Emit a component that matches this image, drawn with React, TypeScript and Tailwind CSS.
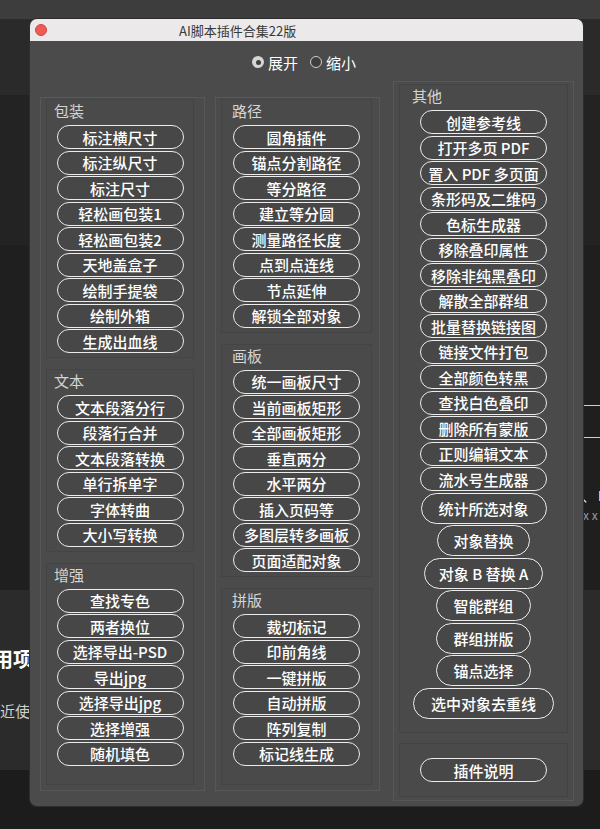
import React from "react";

type BtnProps = { t: string; cls?: string };

function Btn({ t, cls }: BtnProps) {
  return (
    <div
      className={
        "shrink-0 rounded-full border-[1.5px] border-[#ececec] bg-[#474747] text-white text-[15px] leading-none font-medium flex items-center justify-center whitespace-nowrap " +
        (cls ?? "w-[127px] h-[24px]")
      }
    >
      {t}
    </div>
  );
}

type GroupProps = {
  title: string;
  items: string[];
  labelPad: string;
  grow?: boolean;
  children?: React.ReactNode;
};

function Group({ title, items, labelPad, grow, children }: GroupProps) {
  return (
    <div
      className={
        "border border-[#444444] bg-[#4a4a4a] pt-[2px] pb-[4px] flex flex-col " +
        (grow ? "flex-1" : "")
      }
    >
      <div className={"h-[18px] leading-[18px] text-[15px] text-[#d4d4d4] mb-[5px] " + labelPad}>
        {title}
      </div>
      <div className="flex flex-col items-center gap-[1.5px]">
        {items.map((t) => (
          <Btn key={t} t={t} />
        ))}
        {children}
      </div>
    </div>
  );
}

const pack = ["标注横尺寸", "标注纵尺寸", "标注尺寸", "轻松画包装1", "轻松画包装2", "天地盖盒子", "绘制手提袋", "绘制外箱", "生成出血线"];
const text = ["文本段落分行", "段落行合并", "文本段落转换", "单行拆单字", "字体转曲", "大小写转换"];
const enhance = ["查找专色", "两者换位", "选择导出-PSD", "导出jpg", "选择导出jpg", "选择增强", "随机填色"];
const path = ["圆角插件", "锚点分割路径", "等分路径", "建立等分圆", "测量路径长度", "点到点连线", "节点延伸", "解锁全部对象"];
const board = ["统一画板尺寸", "当前画板矩形", "全部画板矩形", "垂直两分", "水平两分", "插入页码等", "多图层转多画板", "页面适配对象"];
const impose = ["裁切标记", "印前角线", "一键拼版", "自动拼版", "阵列复制", "标记线生成"];
const other = ["创建参考线", "打开多页 PDF", "置入 PDF 多页面", "条形码及二维码", "色标生成器", "移除叠印属性", "移除非纯黑叠印", "解散全部群组", "批量替换链接图", "链接文件打包", "全部颜色转黑", "查找白色叠印", "删除所有蒙版", "正则编辑文本", "流水号生成器"];

export default function App() {
  return (
    <div className="relative w-[600px] h-[829px] overflow-hidden bg-[#1f1f1f] font-['Noto_Sans_CJK_SC','Noto_Sans',sans-serif]">
      {/* background application */}
      <div className="flex flex-col h-full">
        <div className="h-[19px] bg-[#3d3d3d]" />
        <div className="h-[76px] bg-[#2a2a2a]" />
        <div className="h-[150px] bg-[#232323]" />
        <div className="h-[345px] bg-[#1f1f1f] flex justify-end">
          <div className="w-[20px] flex flex-col pt-[160px]">
            <div className="h-[1px] bg-[#cfcfcf]" />
            <div className="h-[1px] bg-[#cfcfcf] mt-[31px]" />
            <div className="mt-[50px] text-[13px] leading-[16px] text-white whitespace-nowrap overflow-hidden pl-[2px]">、 B</div>
            <div className="mt-[4px] text-[12px] leading-[14px] text-[#9a9a9a] whitespace-nowrap overflow-hidden pl-[3px]">x x</div>
          </div>
        </div>
        <div className="h-[180px] bg-[#2b2b2b] flex flex-col">
          <div className="mt-[55px] -ml-[7px] text-[20px] leading-[28px] font-bold text-white whitespace-nowrap">用项</div>
          <div className="mt-[28px] text-[15px] leading-[20px] text-[#cfcfcf] whitespace-nowrap">近使</div>
        </div>
        <div className="flex-1 bg-[#1c1c1c]" />
      </div>

      {/* plugin window */}
      <div className="absolute left-[30px] top-[19px] w-[553px] h-[787px] rounded-[7px] overflow-hidden bg-[#4b4b4b] flex flex-col shadow-[0_0_0_1px_#2e2e2e]">
        <div className="h-[22px] shrink-0 bg-[#ebe9e9] flex items-center">
          <div className="ml-[5px] w-[12px] h-[12px] rounded-full bg-[#ee5a54] border border-[#d24640]" />
          <div className="ml-[132px] text-[13px] leading-none text-[#383838]">AI脚本插件合集22版</div>
        </div>

        {/* radio row */}
        <div className="mt-[12px] h-[18px] flex items-center pl-[222px]">
          <div className="w-[12px] h-[12px] rounded-full bg-[#d6d6d6] flex items-center justify-center">
            <div className="w-[5px] h-[5px] rounded-full bg-[#3f3f3f]" />
          </div>
          <div className="ml-[4px] text-[15px] leading-none text-white">展开</div>
          <div className="ml-[12px] w-[12px] h-[12px] rounded-full border border-[#d0d0d0] bg-[#3e3e3e]" />
          <div className="ml-[4px] text-[15px] leading-none text-white">缩小</div>
        </div>

        {/* columns */}
        <div className="mt-[10px] flex items-start pl-[10px]">
          <div className="mt-[16px] w-[165px] h-[694px] border border-[#575757] pl-[5px] pr-[10px] pt-[1px] pb-[5px] flex flex-col gap-[11px]">
            <Group title="包装" items={pack} labelPad="pl-[7px]" />
            <Group title="文本" items={text} labelPad="pl-[7px]" />
            <Group title="增强" items={enhance} labelPad="pl-[7px]" grow />
          </div>

          <div className="ml-[10px] mt-[16px] w-[165px] h-[694px] border border-[#575757] pl-[5px] pr-[7px] pt-[1px] pb-[5px] flex flex-col gap-[11px]">
            <Group title="路径" items={path} labelPad="pl-[10px]" />
            <Group title="画板" items={board} labelPad="pl-[10px]" />
            <Group title="拼版" items={impose} labelPad="pl-[10px]" grow />
          </div>

          <div className="ml-[13px] w-[181px] h-[720px] border border-[#575757] px-[5px] pt-[2px] pb-[3px] flex flex-col gap-[10px]">
            <Group title="其他" items={other} labelPad="pl-[12px]" grow>
              <Btn t="统计所选对象" cls="w-[126px] h-[31px]" />
              <Btn t="对象替换" cls="w-[93px] h-[31px]" />
              <Btn t="对象 B 替换 A" cls="w-[119px] h-[31px]" />
              <Btn t="智能群组" cls="w-[95px] h-[31px]" />
              <Btn t="群组拼版" cls="w-[95px] h-[31px]" />
              <Btn t="锚点选择" cls="w-[95px] h-[31px]" />
              <Btn t="选中对象去重线" cls="w-[141px] h-[31px]" />
            </Group>
            <div className="h-[54px] shrink-0 border border-[#444444] bg-[#4a4a4a] flex items-center justify-center">
              <Btn t="插件说明" />
            </div>
          </div>
        </div>
      </div>
    </div>
  );
}
